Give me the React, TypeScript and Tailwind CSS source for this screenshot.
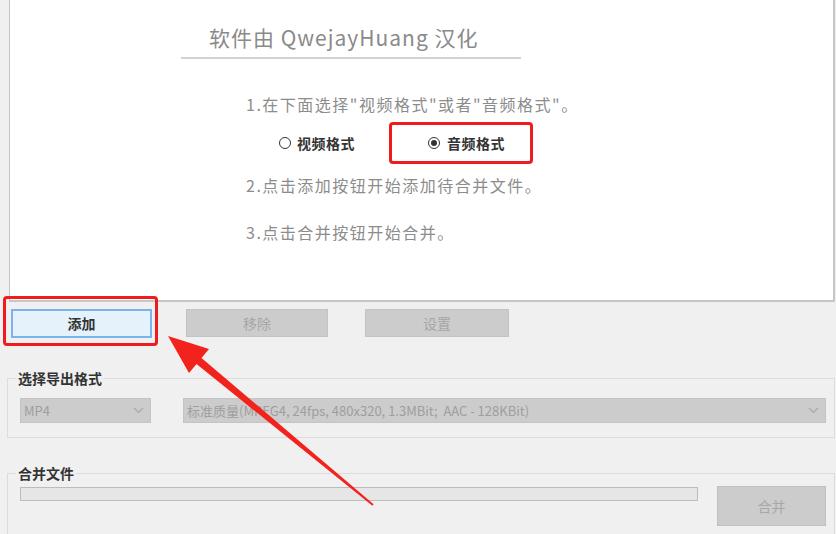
import React from "react"

function Chevron() {
  return (
    <svg width="11" height="7" viewBox="0 0 11 7" className="shrink-0">
      <polyline points="1,1 5.5,5.5 10,1" fill="none" stroke="#a9a9a9" strokeWidth="1.2" />
    </svg>
  )
}

function Radio({ checked }: { checked?: boolean }) {
  return (
    <span className="w-[12px] h-[12px] rounded-full border border-[#333] bg-white flex items-center justify-center shrink-0">
      {checked && <span className="w-[6px] h-[6px] rounded-full bg-[#333]" />}
    </span>
  )
}

export default function App() {
  return (
    <div className="relative w-[836px] h-[534px] overflow-hidden bg-[#f0f0f0] font-['Noto_Sans_CJK_SC','Microsoft_YaHei',sans-serif]">
      {/* intro panel */}
      <div className="ml-[9px] w-[826px] h-[302px] bg-white border-l border-r-2 border-b-2 border-[#c6c6c6]">
        <div className="ml-[171px] w-[340px] pt-[23px] pb-[6px] border-b-2 border-[#d2d2d2]">
          <div className="pl-[28px] text-[21px] leading-[28px] tracking-[1px] text-[#8a8a8a]">
            软件由 QwejayHuang 汉化
          </div>
        </div>

        <div className="ml-[236px] mt-[35px] text-[16px] leading-[20px] tracking-[1.5px] text-[#8c8c8c]">
          <div>1.在下面选择"视频格式"或者"音频格式"。</div>

          <div className="mt-[8px] h-[42px] flex items-center pl-[33px] text-[14px] tracking-[0.5px] font-bold text-[#333]">
            <div className="flex items-center gap-[6px]">
              <Radio />
              <span>视频格式</span>
            </div>
            <div className="ml-[34px] w-[144px] h-[42px] border-[3px] border-[#ee1c1c] rounded-[4px] flex items-center gap-[7px] pl-[36px]">
              <Radio checked />
              <span>音频格式</span>
            </div>
          </div>

          <div className="mt-[11px]">2.点击添加按钮开始添加待合并文件。</div>
          <div className="mt-[27px]">3.点击合并按钮开始合并。</div>
        </div>
      </div>

      {/* action buttons */}
      <div className="flex items-start mt-[7px] text-[14px]">
        <button className="ml-[11px] w-[141px] h-[29px] bg-[#e5f1fb] border-2 border-[#7ab4ec] font-bold text-[#333] flex items-center justify-center">
          添加
        </button>
        <button className="ml-[34px] w-[142px] h-[28px] bg-[#cccccc] border border-[#c3c3c3] text-[#a6a6a6] flex items-center justify-center">
          移除
        </button>
        <button className="ml-[37px] w-[144px] h-[28px] bg-[#cccccc] border border-[#c3c3c3] text-[#a6a6a6] flex items-center justify-center">
          设置
        </button>
      </div>

      {/* export format */}
      <fieldset className="ml-[7px] mt-[31px] w-[828px] border border-[#dcdcdc] pl-[12px] pr-[8px] pb-[14px]">
        <legend className="ml-[-4px] px-[2px] text-[14px] leading-[18px] font-bold text-[#333]">选择导出格式</legend>
        <div className="flex mt-[11px] text-[13px] text-[#9e9e9e]">
          <div className="w-[131px] h-[25px] bg-[#cccccc] border border-[#c4c4c4] flex items-center justify-between pl-[3px] pr-[6px]">
            <span>MP4</span>
            <Chevron />
          </div>
          <div className="ml-[32px] flex-1 h-[25px] bg-[#cccccc] border border-[#c4c4c4] flex items-center justify-between pl-[3px] pr-[6px]">
            <span>标准质量(MPEG4, 24fps, 480x320, 1.3MBit;&nbsp; AAC - 128KBit)</span>
            <Chevron />
          </div>
        </div>
      </fieldset>

      {/* merge */}
      <fieldset className="ml-[7px] mt-[26px] w-[828px] border border-[#dcdcdc] pl-[12px] pr-[8px] pb-[20px]">
        <legend className="ml-[-4px] px-[2px] text-[14px] leading-[18px] font-bold text-[#333]">合并文件</legend>
        <div className="flex items-start mt-[4px]">
          <div className="mt-[1px] w-[678px] h-[14px] bg-[#e6e6e6] border border-[#bcbcbc]" />
          <button className="ml-[19px] w-[109px] h-[40px] bg-[#cccccc] border border-[#c0c0c0] text-[14px] text-[#a8a8a8] flex items-center justify-center">
            合并
          </button>
        </div>
      </fieldset>

      {/* annotations */}
      <div className="absolute left-[3px] top-[296px] w-[155px] h-[50px] border-[3px] border-[#ee1c1c] rounded-[4px] pointer-events-none" />
      <svg className="absolute inset-0 pointer-events-none" width="836" height="534" viewBox="0 0 836 534">
        <polygon
          points="168,336 209,349 201.5,358 373.6,504.2 372.4,505.8 196.5,364 189,373"
          fill="#f2231d"
        />
      </svg>
    </div>
  )
}
